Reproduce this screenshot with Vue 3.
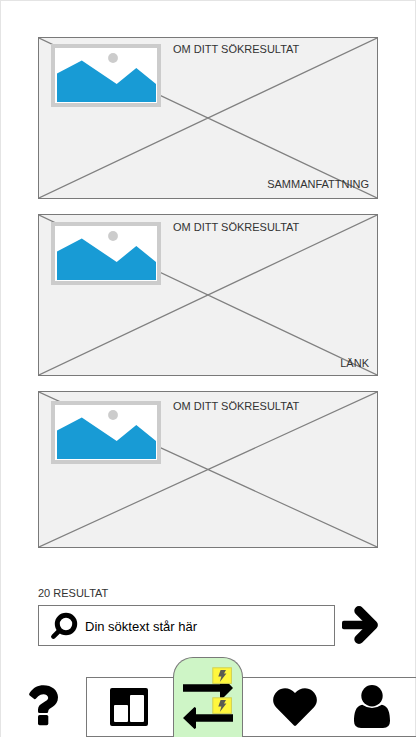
<script setup>
const results = [
  { title: 'OM DITT SÖKRESULTAT', note: 'SAMMANFATTNING', size: 'first' },
  { title: 'OM DITT SÖKRESULTAT', note: 'LÄNK', size: 'second' },
  { title: 'OM DITT SÖKRESULTAT', note: '', size: 'third' }
]
</script>

<template>
  <div class="screen">
    <main class="results">
      <article v-for="r in results" :key="r.size" class="card" :class="r.size">
        <svg class="cross" viewBox="0 0 100 100" preserveAspectRatio="none">
          <path d="M0 0L100 100M0 100L100 0" vector-effect="non-scaling-stroke" />
        </svg>
        <svg class="thumb" viewBox="0 0 110 63">
          <rect x="2" y="2" width="106" height="59" fill="#fff" stroke="#ccc" stroke-width="4" />
          <circle cx="62" cy="14" r="4.9" fill="#ccc" />
          <path d="M6 29.5L30.8 16.5L65.7 40L85.3 24L105 40V58H6Z" fill="#189bd5" />
        </svg>
        <div class="text">
          <span class="title">{{ r.title }}</span>
          <span v-if="r.note" class="note">{{ r.note }}</span>
        </div>
      </article>
    </main>

    <div class="count">20 RESULTAT</div>
    <div class="search">
      <div class="field">
        <svg class="glass" viewBox="0 0 28 28">
          <circle cx="16" cy="12" r="8.7" fill="none" stroke="#000" stroke-width="5" />
          <path d="M9.5 18.5L3.4 24.6" stroke="#000" stroke-width="4.6" stroke-linecap="round" />
        </svg>
        <span>Din söktext står här</span>
      </div>
      <svg class="go" viewBox="0 0 36 38">
        <rect x="0" y="14.8" width="30" height="8.5" rx="1.8" />
        <path d="M17 4.8L31.2 19L17 33.2" fill="none" stroke="#000" stroke-width="9.4" stroke-linecap="round" stroke-linejoin="round" />
      </svg>
    </div>

    <footer class="bottom">
      <svg class="help" viewBox="0 0 30 42">
        <path d="M0.6 8C4.5 2.2 8.7 0.2 14.5 0.2C22.5 0.2 29 5 29 12.3C29 22 19.2 22.3 19.2 26.5Q19.2 28 17.7 28H10.5Q9 28 9 26.5V24.5C9 17.8 19.2 17 19.2 13.1C19.2 8.8 12.6 8 9.2 11.3L6.8 13.8Q6 14.6 5.2 14L0.7 10.5Q-0.4 9.5 0.6 8Z" />
        <rect x="9" y="30" width="10.3" height="10.2" rx="1.6" />
      </svg>
      <nav class="bar">
        <svg class="board" viewBox="0 0 38 38">
          <path fill-rule="evenodd" d="M2 0H36Q38 0 38 2V36Q38 38 36 38H2Q0 38 0 36V2Q0 0 2 0ZM5 17Q4 17 4 18V33Q4 34 5 34H17Q18 34 18 33V18Q18 17 17 17ZM21 7Q20 7 20 8V33Q20 34 21 34H33Q34 34 34 33V8Q34 7 33 7Z" />
        </svg>
        <div class="tab">
          <svg viewBox="0 0 68 79">
            <path d="M9 26.3H46V20L49 19.5L59 30L49 40H46V33.8H9Z" />
            <path d="M59 56.2H22V50L20.5 49L9 60L20.5 71L22 70V63.8H59Z" />
            <g v-for="y in [9, 39]" :key="y" :transform="`translate(38 ${y})`">
              <rect x=".8" y=".8" width="18.6" height="15.6" fill="#fff63d" stroke="#d1d052" />
              <path d="M8.6 3H14L12 6.6H14.4L7.8 15L9.4 9.6H6.3Z" fill="#5a5a52" />
            </g>
          </svg>
        </div>
        <svg class="heart" viewBox="0 0 44 38">
          <path d="M22 5C26.8 -0.8 34.8 -1.2 39.5 3C44.6 7.5 45.4 14.3 41 19.2L23 37.5Q22 38.4 21 37.5L3 19.2C-1.4 14.3 -0.6 7.5 4.5 3C9.2 -1.2 17.2 -0.8 22 5Z" />
        </svg>
        <svg class="user" viewBox="0 0 36 43">
          <circle cx="18" cy="10.8" r="10.7" />
          <path d="M8.2 19.8Q18 26.3 27.8 19.8C34.5 20.8 36 28.5 36 36Q36 43 29 43H7Q0 43 0 36C0 28.5 1.5 20.8 8.2 19.8Z" />
        </svg>
      </nav>
    </footer>
  </div>
</template>

<style>
body {
  margin: 0;
  overflow: hidden;
  background: #fff;
}
</style>

<style scoped>
.screen {
  box-sizing: border-box;
  width: 416px;
  height: 737px;
  border: 1px solid #e4e4e4;
  border-bottom: 0;
  padding-top: 36px;
  display: flex;
  flex-direction: column;
  background: #fff;
  color: #333;
  font: 11px/13px "Liberation Sans", Arial, sans-serif;
}
svg {
  display: block;
  flex: none;
}
.results {
  margin-left: 37px;
  width: 340px;
  display: flex;
  flex-direction: column;
  gap: 15px;
}
.card {
  position: relative;
  box-sizing: border-box;
  height: 162px;
  border: 1px solid #797979;
  background: #f1f1f1;
  padding: 6px 8px 7px 12px;
  display: flex;
  align-items: flex-start;
  gap: 12px;
}
.second {
  padding: 7px 8px 5px 12px;
}
.third {
  height: 157px;
  padding-top: 9px;
}
.cross {
  position: absolute;
  inset: 0;
  width: 100%;
  height: 100%;
}
.cross path {
  stroke: #808080;
  stroke-width: 1.2;
}
.thumb {
  position: relative;
  width: 110px;
  height: 63px;
}
.text {
  position: relative;
  align-self: stretch;
  flex: 1;
  display: flex;
  flex-direction: column;
  justify-content: space-between;
}
.title {
  margin-top: -1px;
}
.note {
  text-align: right;
}
.count {
  margin: 39px 0 0 37px;
}
.search {
  margin: 5px 37px 0;
  display: flex;
  align-items: flex-start;
  gap: 7px;
}
.field {
  box-sizing: border-box;
  width: 297px;
  height: 41px;
  border: 1px solid #797979;
  display: flex;
  align-items: center;
  padding-left: 11px;
  gap: 7px;
  color: #000;
  font-size: 13px;
  line-height: 15px;
}
.glass {
  width: 28px;
  height: 28px;
}
.field span {
  padding-top: 1px;
}
.go {
  width: 36px;
  height: 38px;
  margin-top: 1px;
}
.bottom {
  margin-top: 31px;
  display: flex;
}
.help {
  width: 30px;
  height: 42px;
  margin: 8px 27px 0 28px;
}
.bar {
  box-sizing: border-box;
  width: 330px;
  height: 60px;
  margin-right: -1px;
  flex: none;
  border: 1px solid #797979;
  border-right: 0;
  display: flex;
  align-items: flex-start;
}
.board {
  width: 38px;
  height: 38px;
  margin: 10px 25px 0 23px;
}
.tab {
  box-sizing: border-box;
  flex: none;
  width: 70px;
  height: 80px;
  margin-top: -21px;
  border: 1px solid #797979;
  border-bottom: 0;
  border-radius: 20px 20px 0 0;
  background: #cef5c6;
}
.tab svg {
  width: 68px;
  height: 79px;
}
.heart {
  width: 44px;
  height: 38px;
  margin: 10px 37px 0 30px;
}
.user {
  width: 36px;
  height: 43px;
  margin-top: 7px;
}
</style>
